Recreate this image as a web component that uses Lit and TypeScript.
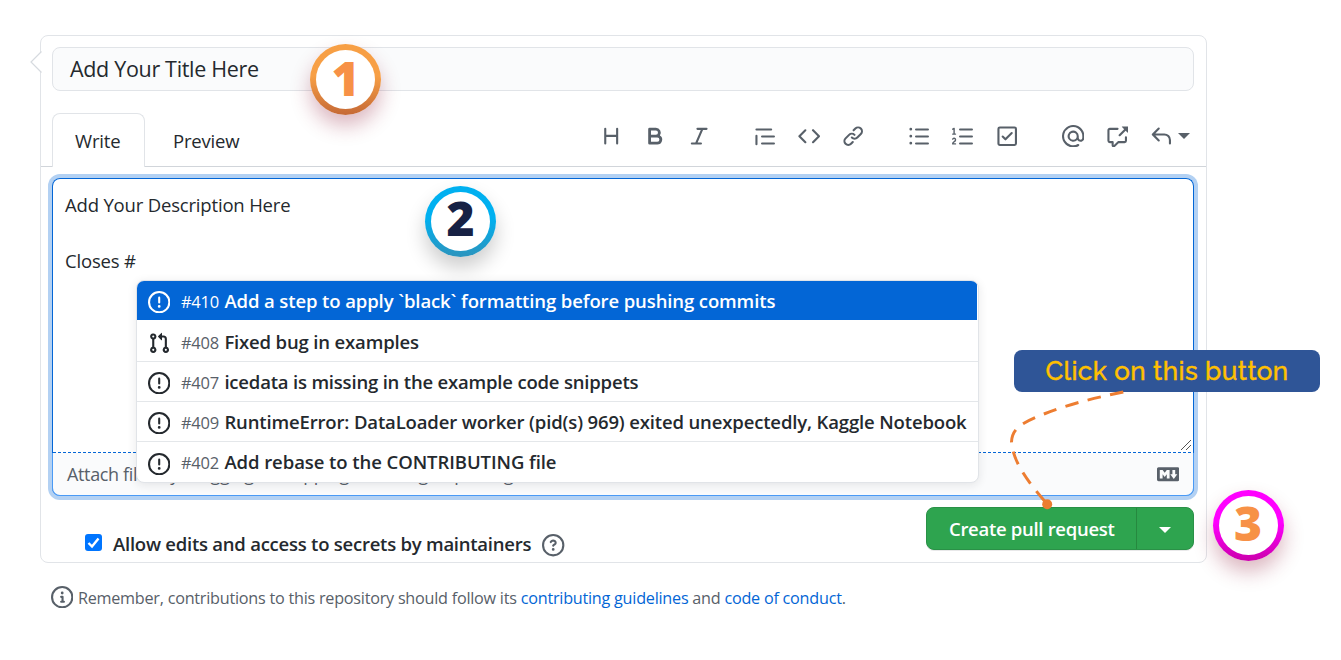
import { LitElement, html, css, svg } from "lit";
import { customElement, property } from "lit/decorators.js";
import { classMap } from "lit/directives/class-map.js";

const ICONS: Record<string, string> = {
  heading: "M3.75 2a.75.75 0 01.75.75V7h7V2.75a.75.75 0 011.5 0v10.5a.75.75 0 01-1.5 0V8.5h-7v4.75a.75.75 0 01-1.5 0V2.75A.75.75 0 013.75 2z",
  bold: "M4 2a1 1 0 00-1 1v10a1 1 0 001 1h5.5a3.5 3.5 0 001.852-6.47A3.5 3.5 0 008.5 2H4zm4.5 5a1.5 1.5 0 100-3H5v3h3.5zM5 9v3h4.5a1.5 1.5 0 000-3H5z",
  italic: "M6 2.75A.75.75 0 016.75 2h6.5a.75.75 0 010 1.5h-2.505l-3.858 9H9.25a.75.75 0 010 1.5h-6.5a.75.75 0 010-1.5h2.505l3.858-9H6.75A.75.75 0 016 2.75z",
  quote: "M1.75 2.5a.75.75 0 000 1.5h10.5a.75.75 0 000-1.5H1.75zm4 5a.75.75 0 000 1.5h8.5a.75.75 0 000-1.5h-8.5zm0 5a.75.75 0 000 1.5h8.5a.75.75 0 000-1.5h-8.5zM2.5 7.75a.75.75 0 00-1.5 0v6a.75.75 0 001.5 0v-6z",
  code: "M4.72 3.22a.75.75 0 011.06 1.06L2.06 8l3.72 3.72a.75.75 0 11-1.06 1.06L.47 8.53a.75.75 0 010-1.06l4.25-4.25zm6.56 0a.75.75 0 10-1.06 1.06L13.94 8l-3.72 3.72a.75.75 0 101.06 1.06l4.25-4.25a.75.75 0 000-1.06l-4.25-4.25z",
  link: "M7.775 3.275a.75.75 0 001.06 1.06l1.25-1.25a2 2 0 112.83 2.83l-2.5 2.5a2 2 0 01-2.83 0 .75.75 0 00-1.06 1.06 3.5 3.5 0 004.95 0l2.5-2.5a3.5 3.5 0 00-4.95-4.95l-1.25 1.25zm-4.69 9.64a2 2 0 010-2.83l2.5-2.5a2 2 0 012.83 0 .75.75 0 001.06-1.06 3.5 3.5 0 00-4.95 0l-2.5 2.5a3.5 3.5 0 004.95 4.95l1.25-1.25a.75.75 0 00-1.06-1.06l-1.25 1.25a2 2 0 01-2.83 0z",
  bullets: "M2 4a1 1 0 100-2 1 1 0 000 2zm3.75-1.5a.75.75 0 000 1.5h8.5a.75.75 0 000-1.5h-8.5zm0 5a.75.75 0 000 1.5h8.5a.75.75 0 000-1.5h-8.5zm0 5a.75.75 0 000 1.5h8.5a.75.75 0 000-1.5h-8.5zM3 8a1 1 0 11-2 0 1 1 0 012 0zm-1 6a1 1 0 100-2 1 1 0 000 2z",
  numbers: "M2.003 2.5a.5.5 0 00-.723-.447l-1.003.5a.5.5 0 00.446.895l.28-.14V6H.5a.5.5 0 000 1h2.006a.5.5 0 100-1h-.503V2.5zM5 3.25a.75.75 0 01.75-.75h8.5a.75.75 0 010 1.5h-8.5A.75.75 0 015 3.25zm0 5a.75.75 0 01.75-.75h8.5a.75.75 0 010 1.5h-8.5A.75.75 0 015 8.25zm0 5a.75.75 0 01.75-.75h8.5a.75.75 0 010 1.5h-8.5a.75.75 0 01-.75-.75zM.924 10.32l.003-.004a.851.851 0 01.144-.153A.66.66 0 011.5 10c.195 0 .306.068.374.146a.57.57 0 01.128.376c0 .453-.269.682-.8 1.078l-.035.025C.692 11.98 0 12.495 0 13.5a.5.5 0 00.5.5h2.003a.5.5 0 000-1H1.146c.132-.197.351-.372.654-.597l.047-.035c.47-.35 1.156-.858 1.156-1.845 0-.365-.118-.744-.377-1.038-.268-.303-.658-.484-1.126-.484-.48 0-.84.202-1.068.392a1.858 1.858 0 00-.348.384l-.01.018a.5.5 0 00.851.525z",
  task: "M2.5 2.75a.25.25 0 01.25-.25h10.5a.25.25 0 01.25.25v10.5a.25.25 0 01-.25.25H2.75a.25.25 0 01-.25-.25V2.75zM2.75 1A1.75 1.75 0 001 2.75v10.5c0 .966.784 1.75 1.75 1.75h10.5A1.75 1.75 0 0015 13.25V2.75A1.75 1.75 0 0013.25 1H2.75zm9.03 5.28a.75.75 0 00-1.06-1.06L6.75 9.19 5.28 7.72a.75.75 0 00-1.06 1.06l2 2a.75.75 0 001.06 0l4.5-4.5z",
  mention: "M4.75 2.37a6.5 6.5 0 006.5 11.26.75.75 0 01.75 1.298 8 8 0 113.994-7.273.754.754 0 01.006.095v1.5a2.75 2.75 0 01-5.072 1.475A4 4 0 1112 8v1.25a1.25 1.25 0 002.5 0V7.867a6.5 6.5 0 00-9.75-5.496V2.37zM10.5 8a2.5 2.5 0 10-5 0 2.5 2.5 0 005 0z",
  reference: "M16 1.25v4.146a.25.25 0 01-.427.177L14.03 4.03l-3.75 3.75a.75.75 0 11-1.06-1.06l3.75-3.75-1.543-1.543A.25.25 0 0111.604 1h4.146a.25.25 0 01.25.25zM2.75 3.5a.25.25 0 00-.25.25v7.5c0 .138.112.25.25.25h2a.75.75 0 01.75.75v2.19l2.72-2.72a.75.75 0 01.53-.22h4.5a.25.25 0 00.25-.25v-2.5a.75.75 0 111.5 0v2.5A1.75 1.75 0 0113.25 13H9.06l-2.573 2.573A1.457 1.457 0 014 14.543V13H2.75A1.75 1.75 0 011 11.25v-7.5C1 2.784 1.784 2 2.75 2h5.5a.75.75 0 010 1.5h-5.5z",
  reply: "M6.78 1.97a.75.75 0 010 1.06L3.81 6h6.44A4.75 4.75 0 0115 10.75v2.5a.75.75 0 01-1.5 0v-2.5a3.25 3.25 0 00-3.25-3.25H3.81l2.97 2.97a.75.75 0 11-1.06 1.06L1.47 7.28a.75.75 0 010-1.06l4.25-4.25a.75.75 0 011.06 0z",
  issue: "M8 1.5a6.5 6.5 0 100 13 6.5 6.5 0 000-13zM0 8a8 8 0 1116 0A8 8 0 010 8zm9 3a1 1 0 11-2 0 1 1 0 012 0zm-.25-6.25a.75.75 0 00-1.5 0v3.5a.75.75 0 001.5 0v-3.5z",
  pull: "M7.177 3.073L9.573.677A.25.25 0 0110 .854v4.792a.25.25 0 01-.427.177L7.177 3.427a.25.25 0 010-.354zM3.75 2.5a.75.75 0 100 1.5.75.75 0 000-1.5zm-2.25.75a2.25 2.25 0 113 2.122v5.256a2.251 2.251 0 11-1.5 0V5.372A2.25 2.25 0 011.5 3.25zM11 2.5h-1V4h1a1 1 0 011 1v5.628a2.251 2.251 0 101.5 0V5A2.5 2.5 0 0011 2.5zm1 10.25a.75.75 0 111.5 0 .75.75 0 01-1.5 0zM3.75 12a.75.75 0 100 1.5.75.75 0 000-1.5z",
  question: "M8 1.5a6.5 6.5 0 100 13 6.5 6.5 0 000-13zM0 8a8 8 0 1116 0A8 8 0 010 8zm9 3a1 1 0 11-2 0 1 1 0 012 0zM6.92 6.085c.081-.16.19-.299.34-.398.145-.097.371-.187.74-.187.28 0 .553.087.738.225A.613.613 0 019 6.25c0 .177-.04.264-.077.318a.956.956 0 01-.277.245c-.076.051-.158.1-.258.161l-.007.004a7.728 7.728 0 00-.313.195 2.416 2.416 0 00-.692.661.75.75 0 001.248.832.956.956 0 01.276-.24l.214-.137.014-.008c.094-.057.21-.127.33-.208.254-.169.537-.392.735-.69.206-.31.307-.69.307-1.133 0-.765-.4-1.36-.862-1.725A2.763 2.763 0 008 4c-.631 0-1.155.16-1.572.438-.413.276-.68.638-.849.977a.75.75 0 101.342.67z",
  info: "M8 1.5a6.5 6.5 0 100 13 6.5 6.5 0 000-13zM0 8a8 8 0 1116 0A8 8 0 010 8zm6.5-.25A.75.75 0 017.25 7h1a.75.75 0 01.75.75v2.75h.25a.75.75 0 010 1.5h-2a.75.75 0 010-1.5h.25v-2h-.25a.75.75 0 01-.75-.75zM8 6a1 1 0 100-2 1 1 0 000 2z",
  markdown: "M14.85 3H1.15C.52 3 0 3.52 0 4.15v7.69C0 12.48.52 13 1.15 13h13.69c.64 0 1.15-.52 1.15-1.15v-7.7C16 3.52 15.48 3 14.85 3zM9 11H7V8L5.5 9.92 4 8v3H2V5h2l1.5 2L7 5h2v6zm2.99.5L9.5 8H11V5h2v3h1.5l-2.51 3.5z",
};

@customElement("oct-icon")
class OctIcon extends LitElement {
  @property() name = "";
  static styles = css`
    :host { display: block; flex: none; width: 22.4px; height: 22.4px; }
    svg { display: block; width: 100%; height: 100%; fill: currentColor; }
  `;
  render() {
    return html`<svg viewBox="0 0 16 16" aria-hidden="true">${svg`<path fill-rule="evenodd" d=${ICONS[this.name]}></path>`}</svg>`;
  }
}

const TOOLS = [
  ["heading", "bold", "italic"],
  ["quote", "code", "link"],
  ["bullets", "numbers", "task"],
  ["mention", "reference", "reply"],
];

const ISSUES = [
  { id: 410, icon: "issue", tracking: -0.11, title: "Add a step to apply `black` formatting before pushing commits" },
  { id: 408, icon: "pull", tracking: -0.16, title: "Fixed bug in examples" },
  { id: 407, icon: "issue", tracking: -0.19, title: "icedata is missing in the example code snippets" },
  { id: 409, icon: "issue", tracking: -0.145, title: "RuntimeError: DataLoader worker (pid(s) 969) exited unexpectedly, Kaggle Notebook" },
  { id: 402, icon: "issue", tracking: -0.07, title: "Add rebase to the CONTRIBUTING file" },
];

@customElement("app-root")
class AppRoot extends LitElement {
  static styles = css`
    :host {
      display: block; position: relative; box-sizing: border-box;
      width: 1341px; height: 660px; padding: 35px 134px 0 40px; overflow: hidden;
      background: #fff; color: #24292e;
      font-family: "Open Sans", "Noto Sans", sans-serif; font-size: 18.5px; letter-spacing: -.18px; white-space: nowrap;
    }
    * { box-sizing: border-box; }
    .card { position: relative; height: 528px; border: 1px solid #e1e4e8; border-radius: 8px; padding-top: 11px; }
    .pointer { position: absolute; left: -11px; top: 15px; width: 12px; height: 22px; }
    .title { height: 44px; margin: 0 12px 0 11px; padding-left: 17px; border: 1px solid #e1e4e8; border-radius: 8px; background: #fafbfc; font-size: 21.5px; line-height: 42px; letter-spacing: -.32px; }
    .head { display: flex; height: 54px; margin-top: 22px; padding-left: 11px; border-bottom: 1px solid #d1d5da; }
    .tab { height: 54px; line-height: 54px; }
    .tab.on { width: 93px; padding-left: 22px; border: 1px solid #e1e4e8; border-bottom: 0; border-radius: 8px 8px 0 0; background: #fff; }
    .tab.off { padding: 1px 0 0 28px; }
    .tools { display: flex; gap: 43.8px; margin: 12px 16px 0 auto; color: #586069; }
    .group { display: flex; gap: 21.5px; }
    .reply { display: flex; align-items: center; gap: 6px; height: 22.4px; }
    .caret { border: 6px solid transparent; border-top-color: currentColor; border-bottom: 0; }
    .editor { display: flex; flex-direction: column; height: 318px; margin: 11px 12px 0 11px; border: 1px solid #0366d6; border-bottom-color: #4095f5; border-radius: 8px; box-shadow: 0 0 0 4px #b3d1f3; }
    .area { position: relative; flex: 1; padding: 12px 12px; line-height: 28px; background: repeating-linear-gradient(90deg, #0366d6 0 3px, #fff 3px 5px) bottom / 100% 1px no-repeat; }
    .area p { margin: 0; height: 28px; }
    .grip { position: absolute; right: 1px; bottom: 2px; width: 12px; height: 12px; }
    .attach { display: flex; justify-content: space-between; align-items: center; height: 43px; margin: 0 -1px -1px; padding: 0 14px; border: 1px solid #4a9af5; border-top: 0; border-radius: 0 0 8px 8px; background: #fafbfc; color: #586069; font-size: 18px; letter-spacing: -.35px; }
    .actions { display: flex; justify-content: space-between; margin: 11px 12px 0 44px; }
    .allow { display: flex; align-items: center; height: 43px; margin-top: 17px; font-weight: 600; letter-spacing: -.24px; }
    .allow .text { padding-bottom: 4px; }
    .check { width: 17px; height: 17px; border-radius: 3px; background: #0075ff; margin: -7px 11px 0 0; }
    .check svg { display: block; }
    .allow oct-icon { margin-left: 11px; color: #586069; }
    .button { display: flex; width: 268px; height: 43px; border: 1px solid #2a9147; border-radius: 8px; background: #2ea44f; box-shadow: 0 1px 0 rgba(27,31,35,.1); color: #fff; font-weight: 600; line-height: 42px; letter-spacing: -.3px; }
    .label { width: 210px; padding-left: 22px; border-right: 1px solid #26893f; }
    .drop { flex: 1; display: grid; place-items: center; padding-top: 3px; }
    .note { display: flex; align-items: center; gap: 5px; height: 24px; margin: 22px 0 0 10.5px; color: #586069; font-size: 16.2px; letter-spacing: -.24px; }
    .note .text { padding-top: 1px; }
    .note a { color: #0366d6; }
    .menu { position: absolute; left: 136px; top: 280px; width: 843px; height: 203px; border: 1px solid #e1e4e8; border-radius: 8px; background: #fff; box-shadow: 0 2px 10px rgba(27,31,35,.1); overflow: hidden; }
    .row { display: flex; align-items: center; height: 40.1px; padding: 3px 0 0 11px; border-bottom: 1px solid #e4e7ea; }
    .row:last-child { border: 0; }
    .row.on { height: 39px; margin: 0 1px 2px 0; border: 0; color: #fff; background: #0366d6; }
    .num { flex: none; width: 43.5px; margin-left: 10.5px; padding-bottom: 2px; color: #586069; font-size: 16.5px; letter-spacing: -.2px; }
    .row.on .num { color: #fff; }
    .name { font-weight: 600; padding-bottom: 4px; }
    .callout { position: absolute; left: 1014px; top: 350px; width: 306px; height: 42px; border-radius: 8px; background: #2f5597; color: #ffc000; text-align: center; font: 500 26px/42px Raleway, Lato, sans-serif; letter-spacing: .45px; -webkit-text-stroke: .4px #ffc000; }
    .arrow { position: absolute; left: 1000px; top: 385px; width: 135px; height: 130px; }
    .badge { position: absolute; width: 71px; height: 71px; padding: 6px; border-radius: 50%; }
    .disc { display: grid; place-items: center; height: 100%; padding-bottom: 2px; border-radius: 50%; background: #fff; font-size: 48px; font-weight: 800; line-height: 44px; letter-spacing: 0; }
    .one { left: 310px; top: 43.5px; background: linear-gradient(#f79f45 45%, #c56936); color: #f79146; box-shadow: 0 11px 20px rgba(140,20,50,.3); }
    .two { left: 425px; top: 186px; background: linear-gradient(#00b0f0 45%, #2c94bd); color: #172144; box-shadow: 0 11px 20px rgba(0,0,0,.2); }
    .two .disc { padding-bottom: 8px; }
    .three { left: 1212.5px; top: 490px; background: linear-gradient(#ff00ff 45%, #cb00ab); color: #f79146; box-shadow: 0 11px 20px rgba(140,20,50,.3); }
    .three .disc { padding-bottom: 6px; }
  `;
  render() {
    return html`
      <section class="card">
        <svg class="pointer" viewBox="0 0 12 22"><path d="M11.5 .5L1 11L11.5 21.5" fill="#fff" stroke="#d6dadf" stroke-width="1.2"></path></svg>
        <div class="title">Add Your Title Here</div>
        <div class="head">
          <div class="tab on">Write</div>
          <div class="tab off">Preview</div>
          <div class="tools">
            ${TOOLS.map((g) => html`<div class="group">${g.map((n) => n === "reply"
              ? html`<div class="reply"><oct-icon name="reply"></oct-icon><i class="caret"></i></div>`
              : html`<oct-icon name=${n}></oct-icon>`)}</div>`)}
          </div>
        </div>
        <div class="editor">
          <div class="area">
            <p>Add Your Description Here</p><p></p><p>Closes #</p>
            <svg class="grip" viewBox="0 0 12 12"><path d="M1 11L11 1M6 11L11 6" stroke="#555" stroke-width="1"></path></svg>
          </div>
          <div class="attach"><span>Attach files by dragging &amp; dropping, selecting or pasting them.</span><oct-icon name="markdown"></oct-icon></div>
        </div>
        <div class="actions">
          <div class="allow">
            <span class="check"><svg viewBox="0 0 17 17"><path d="M3.5 9L7 12.5L13.5 4.5" fill="none" stroke="#fff" stroke-width="2.4"></path></svg></span>
            <span class="text">Allow edits and access to secrets by maintainers</span><oct-icon name="question"></oct-icon>
          </div>
          <div class="button"><span class="label">Create pull request</span><span class="drop"><i class="caret"></i></span></div>
        </div>
      </section>
      <div class="note"><oct-icon name="info"></oct-icon><span class="text">Remember, contributions to this repository should follow its <a>contributing guidelines</a> and <a>code of conduct</a>.</span></div>
      <div class="badge two"><div class="disc">2</div></div>
      <div class="menu">
        ${ISSUES.map((r, i) => html`<div class=${classMap({ row: true, on: i === 0 })}>
          <oct-icon name=${r.icon}></oct-icon><span class="num">#${r.id}</span><span class="name" style="letter-spacing:${r.tracking}px">${r.title}</span>
        </div>`)}
      </div>
      <div class="badge one"><div class="disc">1</div></div>
      <div class="badge three"><div class="disc">3</div></div>
      <div class="callout">Click on this button</div>
      <svg class="arrow" viewBox="1000 385 135 130">
        <path d="M1123.3 392C1094 398 1066 405 1044 414S1012 428 1011.5 442C1013 463 1030 484 1047 504" fill="none" stroke="#ed7d31" stroke-width="3" stroke-dasharray="13.5 9.5"></path>
        <circle cx="1047.2" cy="504.3" r="5" fill="#ed7d31"></circle>
      </svg>
    `;
  }
}
